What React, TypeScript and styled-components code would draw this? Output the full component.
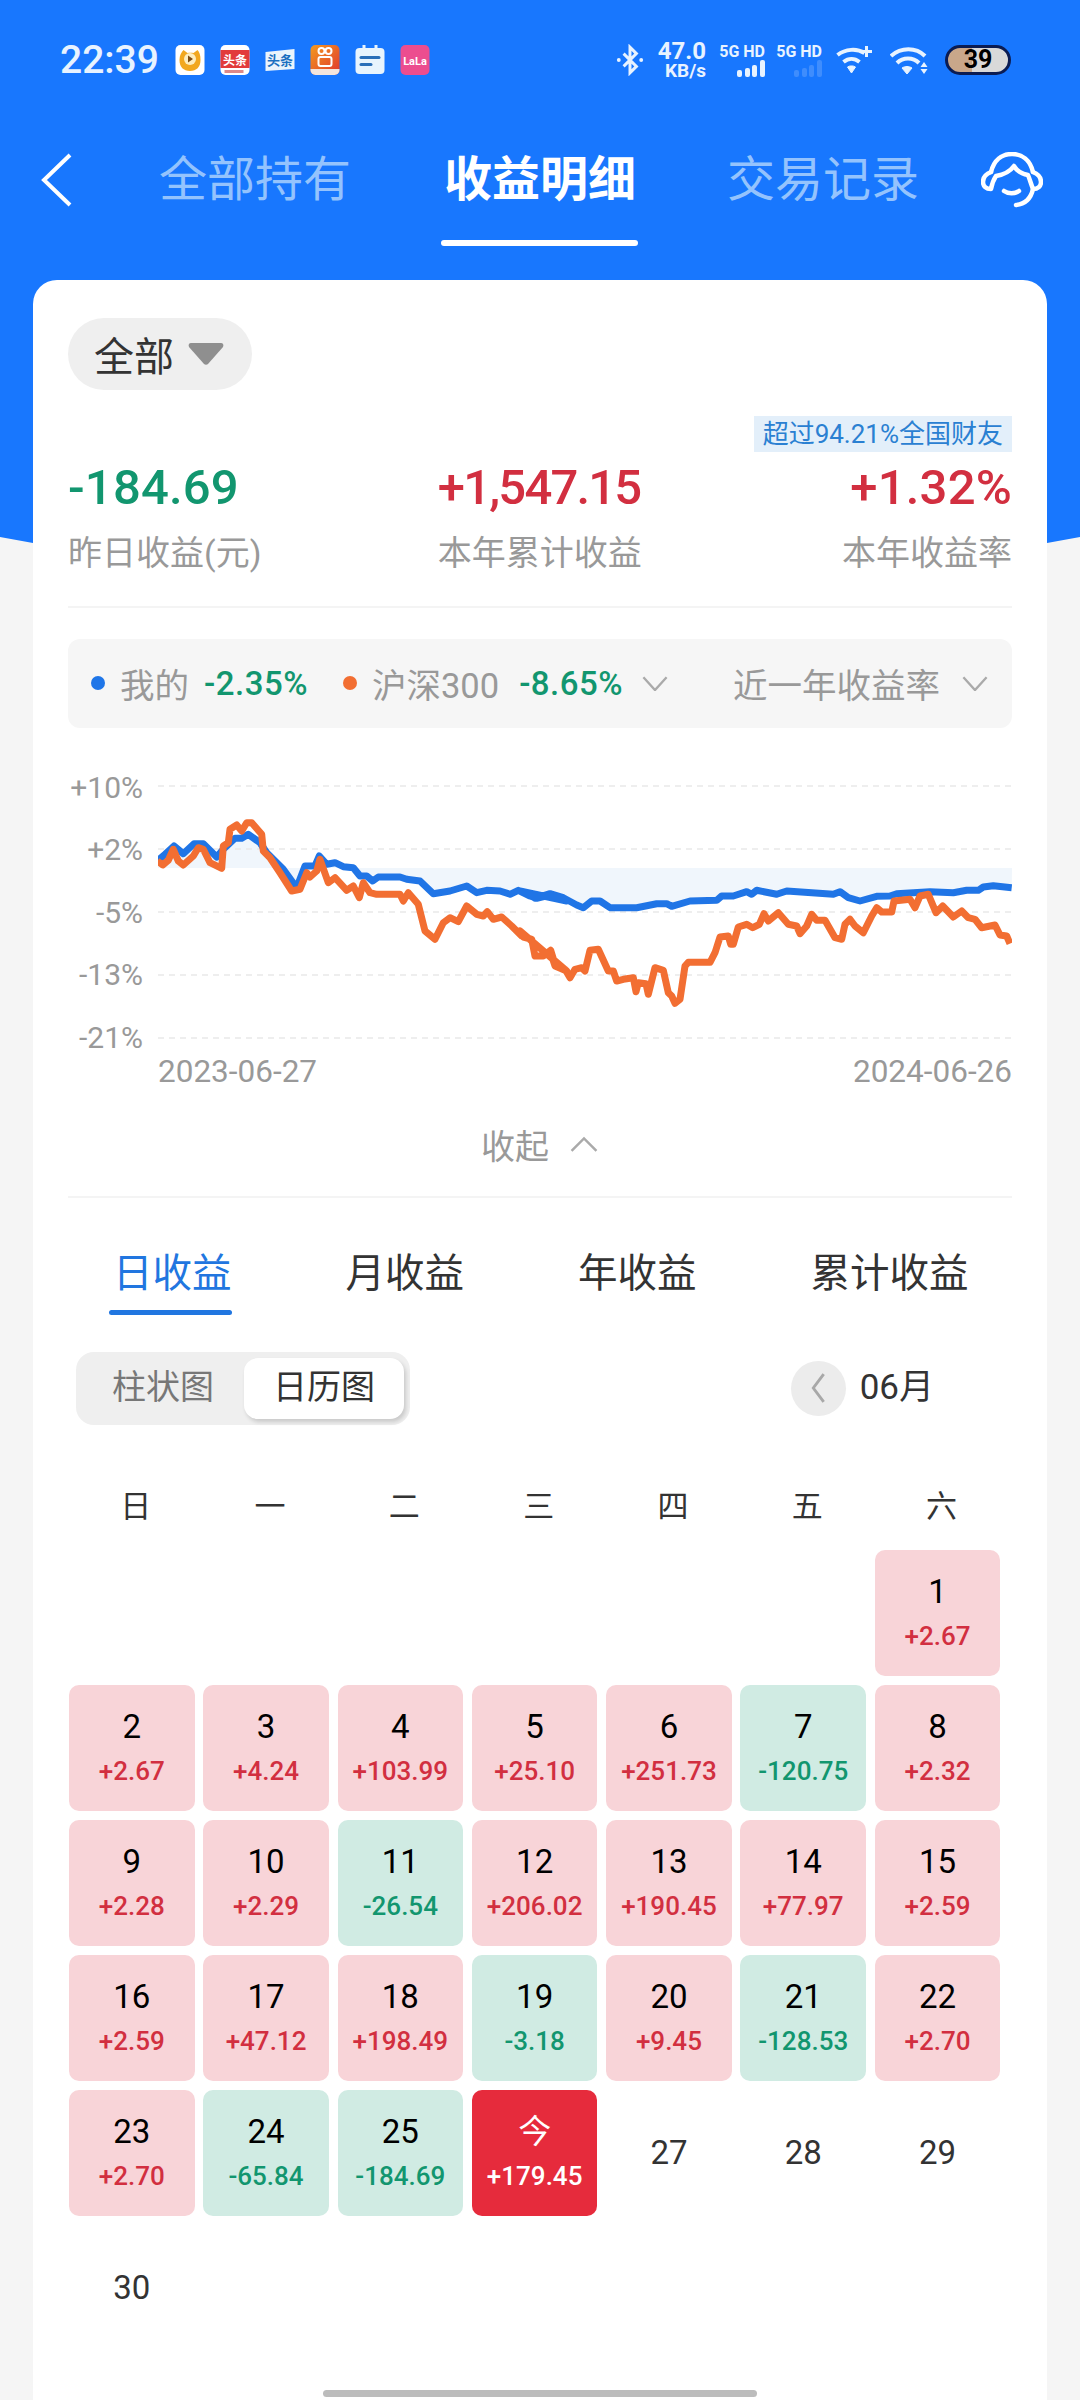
import React from 'react';
import styled, { createGlobalStyle } from 'styled-components';

const GlobalStyle = createGlobalStyle`
  html, body {
    margin: 0;
    padding: 0;
    background: #f5f5f5;
    font-family: Roboto, "Noto Sans CJK SC", sans-serif;
  }
`;

const COLOR = {
  blue: '#1877fe',
  link: '#2176e0',
  green: '#12966f',
  red: '#d22f40',
  grey: '#999999',
  dark: '#333333'
};

const Page = styled.div`
  position: relative;
  width: 1080px;
  height: 2400px;
  overflow: hidden;
  background: #f5f5f5;
  display: flex;
  flex-direction: column;

  &::before {
    content: '';
    position: absolute;
    inset: 0;
    background: ${COLOR.blue};
    clip-path: polygon(0 0, 100% 0, 100% 537px, 1047px 543px, 33px 543px, 0 537px);
  }
`;

/* ---- status bar ---- */
const StatusBar = styled.div`
  position: relative;
  height: 120px;
  flex: none;
  display: flex;
  align-items: center;
  padding: 0 69px 0 60px;
  color: #e8f3ff;
`;

const Clock = styled.span`
  font-size: 39px;
  font-weight: 500;
  width: 115px;
`;

const AppIcons = styled.div`
  display: flex;
  gap: 15px;
`;

const AppIcon = styled.svg`
  width: 30px;
  height: 30px;
  display: block;
`;

const StatusRight = styled.div`
  margin-left: auto;
  display: flex;
  align-items: center;
`;

const Speed = styled.div`
  display: flex;
  flex-direction: column;
  align-items: flex-end;
  margin: 0 10px 0 13px;
  font-weight: 700;
`;

const SpeedValue = styled.span`
  font-size: 24px;
  line-height: 21px;
`;

const SpeedUnit = styled.span`
  font-size: 19px;
  line-height: 17px;
`;

const Signal = styled.div`
  width: 49px;
  margin-right: 8px;
  display: flex;
  flex-direction: column;
  align-items: flex-end;
`;

const SignalLabel = styled.span`
  font-size: 16px;
  font-weight: 700;
  line-height: 17px;
  white-space: nowrap;
`;

const WifiPlus = styled.svg`
  width: 37px;
  height: 30px;
  margin: 0 17px 0 6px;
`;

const Battery = styled.div`
  width: 66px;
  height: 30px;
  box-sizing: border-box;
  margin-left: 17px;
  border: 3px solid #0b1c52;
  border-radius: 15px;
  background: linear-gradient(90deg, #c9a78a 0 40%, #d9d9d9 40% 100%);
  color: #000;
  font-size: 25px;
  font-weight: 700;
  line-height: 24px;
  text-align: center;
`;

/* ---- nav ---- */
const NavBar = styled.div`
  position: relative;
  flex: none;
  height: 160px;
  box-sizing: border-box;
  padding: 0 37px 40px 40px;
  display: flex;
  align-items: center;
`;

const BackIcon = styled.svg`
  flex: none;
  width: 32px;
  height: 54px;
`;

const NavTabs = styled.div`
  display: flex;
  margin-left: 87px;
  flex: none;
`;

const NavTab = styled.span<{ $active?: boolean }>`
  position: relative;
  font-size: 48px;
  line-height: 60px;
  white-space: nowrap;
  font-weight: ${(p) => (p.$active ? 700 : 400)};
  color: ${(p) => (p.$active ? '#ffffff' : '#94c3fd')};
  margin-right: ${(p) => (p.$active ? 91 : 93)}px;

  &:last-child {
    margin-right: 0;
  }

  &::after {
    content: '';
    display: ${(p) => (p.$active ? 'block' : 'none')};
    position: absolute;
    left: -3px;
    right: -2px;
    bottom: -36px;
    height: 6px;
    border-radius: 3px;
    background: #fff;
  }
`;

const NavAction = styled.div`
  margin-left: auto;
  display: flex;
`;

/* ---- card ---- */
const Card = styled.div`
  position: relative;
  flex: 1;
  margin: 0 33px;
  padding: 38px 35px 0;
  background: #fff;
  border-radius: 24px 24px 0 0;
`;

const FilterPill = styled.div`
  width: 184px;
  height: 72px;
  box-sizing: border-box;
  padding-left: 26px;
  border-radius: 36px;
  background: #efefef;
  color: ${COLOR.dark};
  font-size: 40px;
  display: flex;
  align-items: center;
  gap: 14px;
`;

const RankRow = styled.div`
  display: flex;
  justify-content: flex-end;
  margin-top: 26px;
`;

const RankTag = styled.span`
  height: 36px;
  line-height: 36px;
  padding: 0 9px;
  background: #e3effa;
  color: #2a80d2;
  font-size: 26px;
  white-space: nowrap;
`;

const StatRow = styled.div`
  display: flex;
  justify-content: space-between;
  padding-top: 1px;
  padding-bottom: 27.5px;
  border-bottom: 2px solid #f4f4f4;
`;

const Stat = styled.div<{ $align?: string }>`
  display: flex;
  flex-direction: column;
  align-items: ${(p) => p.$align || 'flex-start'};

  &:nth-child(2) {
    margin-right: 24px;
  }
`;

const StatValue = styled.span<{ $up?: boolean; $tight?: boolean }>`
  font-size: 49px;
  font-weight: 500;
  line-height: 70px;
  letter-spacing: ${(p) => (p.$tight ? '-1.8px' : '0.2px')};
  color: ${(p) => (p.$up ? COLOR.red : COLOR.green)};
`;

const StatLabel = styled.span`
  font-size: 34px;
  line-height: 50px;
  margin-top: 5px;
  color: ${COLOR.grey};
  white-space: nowrap;
`;

const Legend = styled.div`
  margin-top: 31px;
  height: 89px;
  box-sizing: border-box;
  padding: 0 23px;
  background: #f6f6f6;
  border-radius: 12px;
  display: flex;
  align-items: center;
  font-size: 34.5px;
  color: ${COLOR.grey};
  white-space: nowrap;
`;

const Dot = styled.i<{ $color: string; $gap?: number }>`
  width: 14px;
  height: 14px;
  border-radius: 50%;
  background: ${(p) => p.$color};
  margin-right: 15px;
  margin-left: ${(p) => p.$gap || 0}px;
`;

const LegendValue = styled.span<{ $gap: number }>`
  margin: 0 18px 0 ${(p) => p.$gap}px;
  font-size: 33px;
  font-weight: 500;
  letter-spacing: 0.5px;
  color: ${COLOR.green};
`;

const LegendRange = styled.span`
  margin-left: auto;
  display: flex;
  align-items: center;
  gap: 21px;
`;

const Chart = styled.div`
  margin-top: 43px;
  display: flex;
`;

const YAxis = styled.div`
  width: 75px;
  height: 282px;
  margin-right: 15px;
  display: flex;
  flex-direction: column;
  justify-content: space-between;
  padding-top: 2px;
  box-sizing: border-box;
  text-align: right;
  font-size: 30px;
  line-height: 30px;
  color: ${COLOR.grey};
`;

const Plot = styled.svg`
  width: 854px;
  height: 282px;
  display: block;
`;

const Dates = styled.div`
  margin: 1px 0 0 90px;
  display: flex;
  justify-content: space-between;
  font-size: 31.5px;
  line-height: 36px;
  color: ${COLOR.grey};
`;

const Collapse = styled.div`
  margin-top: 25px;
  height: 60px;
  display: flex;
  align-items: center;
  justify-content: center;
  gap: 20px;
  font-size: 34px;
  color: ${COLOR.grey};
`;

const Divider = styled.div`
  margin-top: 21px;
  height: 2px;
  background: #f4f4f4;
`;

const PeriodTabs = styled.div`
  margin-top: 48px;
  padding-left: 45px;
  display: flex;
  gap: 114px;
`;

const PeriodTab = styled.span<{ $active?: boolean }>`
  position: relative;
  font-size: 39.500px;
  line-height: 56px;
  white-space: nowrap;
  color: ${(p) => (p.$active ? COLOR.link : COLOR.dark)};

  &::after {
    content: '';
    display: ${(p) => (p.$active ? 'block' : 'none')};
    position: absolute;
    left: -4px;
    right: 0;
    bottom: -13px;
    height: 5px;
    border-radius: 3px;
    background: ${COLOR.link};
  }
`;

const ToolRow = styled.div`
  margin-top: 50px;
  display: flex;
  align-items: center;
  padding-left: 8px;
`;

const Segment = styled.div`
  width: 334px;
  height: 73px;
  box-sizing: border-box;
  padding: 6px;
  border-radius: 18px;
  background: #efefef;
  display: flex;
  align-items: center;
  justify-content: space-between;
`;

const SegmentItem = styled.span<{ $active?: boolean }>`
  width: 160px;
  height: 61px;
  line-height: 58px;
  text-align: center;
  font-size: 34px;
  border-radius: 14px;
  color: ${(p) => (p.$active ? COLOR.dark : '#777777')};
  background: ${(p) => (p.$active ? '#fff' : 'transparent')};
  box-shadow: ${(p) => (p.$active ? '2px 3px 4px rgba(0,0,0,0.16)' : 'none')};
  margin-left: ${(p) => (p.$active ? 0 : 1)}px;
`;

const MonthPicker = styled.div`
  margin-left: auto;
  margin-right: 78px;
  display: flex;
  align-items: center;
  gap: 14px;
  font-size: 35px;
  line-height: 50px;
  color: ${COLOR.dark};
`;

const RoundButton = styled.span`
  width: 55px;
  height: 55px;
  border-radius: 50%;
  background: #ececec;
  display: flex;
  align-items: center;
  justify-content: center;
`;

const CalendarGrid = styled.div`
  margin-left: 1px;
  display: grid;
  grid-template-columns: repeat(7, 125.5px);
  column-gap: 8.8px;
  row-gap: 8.5px;
  grid-auto-rows: 126.5px;
`;

const WeekHead = styled(CalendarGrid)`
  margin-top: 52px;
  margin-bottom: 13px;
  grid-auto-rows: 60px;
`;

const WeekDay = styled.span`
  font-size: 31px;
  line-height: 60px;
  text-align: center;
  color: ${COLOR.dark};
  transform: translateX(4px);
`;

type CellKind = 'up' | 'down' | 'today' | 'none';

const CELL_BG = { up: '#f8d4d8', down: '#d0ebe3', today: '#e62b3c', none: 'transparent' };

const Cell = styled.div<{ $kind: CellKind }>`
  border-radius: 10px;
  background: ${(p) => CELL_BG[p.$kind]};
  display: flex;
  flex-direction: column;
  align-items: center;
  justify-content: center;
  gap: 9px;
`;

const CellDay = styled.span<{ $kind: CellKind }>`
  font-size: 33px;
  line-height: 38px;
  color: ${(p) => (p.$kind === 'today' ? '#fff' : p.$kind === 'none' ? COLOR.dark : '#000')};
`;

const CellValue = styled.span<{ $kind: CellKind }>`
  font-size: 26px;
  line-height: 32px;
  font-weight: 500;
  white-space: nowrap;
  color: ${(p) => (p.$kind === 'today' ? '#fff' : p.$kind === 'up' ? COLOR.red : COLOR.green)};
`;

const HomeBar = styled.div`
  position: absolute;
  left: 323px;
  bottom: 3px;
  width: 434px;
  height: 7px;
  border-radius: 4px;
  background: #bcbcbc;
`;

// points read off the chart, in two half-width strips
const BLUE_A = [[322,330],[345,310],[372,285],[400,308],[432,278],[460,278],[500,318],[520,295],[555,262],[575,262],[595,250],[630,275],[650,305],[700,355],[740,410],[765,345],[795,345],[808,315],[830,340],[855,335],[880,347],[910,350],[930,375],[950,375],[968,390],[985,378],[1050,378],[1070,385],[1110,390],[1150,428],[1200,420],[1250,405],[1280,425],[1310,418],[1350,420],[1380,430],[1405,418],[1440,435],[1460,442],[1500,432],[1550,450]];
const BLUE_B = [[0,420],[30,430],[45,442],[90,428],[130,440],[170,462],[190,470],[215,450],[240,450],[270,470],[350,470],[410,458],[440,458],[455,466],[510,450],[590,448],[605,435],[640,435],[680,422],[695,430],[710,418],[770,430],[800,420],[940,430],[960,422],[985,440],[1020,450],[1070,436],[1110,435],[1130,428],[1230,422],[1300,425],[1340,418],[1375,418],[1390,408],[1420,404],[1475,410]];
const ORANGE_A = [[322,330],[338,342],[355,328],[370,295],[385,330],[400,342],[430,315],[445,290],[460,295],[480,335],[515,352],[520,285],[535,275],[540,235],[560,222],[575,240],[590,215],[605,215],[635,250],[640,300],[660,320],[690,365],[725,420],[750,415],[770,365],[780,378],[800,360],[810,325],[835,395],[855,380],[890,418],[910,405],[928,440],[940,395],[960,425],[980,430],[1050,430],[1060,450],[1075,425],[1105,460],[1125,540],[1155,565],[1180,515],[1200,500],[1225,512],[1250,465],[1280,490],[1300,495],[1312,482],[1330,505],[1355,498],[1385,525],[1415,555],[1445,565],[1455,615],[1480,615],[1500,600],[1515,645],[1550,660]];
const ORANGE_B = [[0,540],[10,558],[35,565],[45,615],[70,615],[92,598],[105,640],[135,655],[150,680],[165,655],[185,650],[195,660],[210,598],[235,595],[265,660],[280,660],[290,690],[310,685],[340,680],[348,722],[355,695],[378,698],[385,730],[405,650],[430,658],[445,725],[455,735],[465,757],[480,745],[495,645],[505,634],[570,634],[585,605],[600,558],[625,555],[632,580],[640,580],[655,528],[680,520],[698,530],[718,520],[732,488],[745,510],[775,485],[805,520],[830,525],[840,548],[860,525],[875,490],[890,508],[915,508],[945,560],[965,565],[975,520],[990,505],[1005,525],[1030,545],[1055,495],[1070,470],[1085,483],[1115,483],[1122,450],[1170,445],[1185,470],[1200,435],[1225,430],[1248,485],[1268,465],[1300,498],[1325,480],[1345,500],[1365,505],[1385,530],[1425,522],[1440,552],[1460,555],[1470,578]];

const toPlot = (a: number[][], b: number[][]) => {
  const left = a.map(([x, y]) => [x / 3 - 108, y / 3 - 20]);
  const right = b.map(([x, y]) => [x / 3 + 362, y / 3 - 20]);
  return [...left, ...right].map(([x, y]) => `${x.toFixed(1)},${y.toFixed(1)}`).join(' ');
};

const bluePoints = toPlot(BLUE_A, BLUE_B);
const orangePoints = toPlot(ORANGE_A, ORANGE_B);

const Y_LABELS = ['+10%', '+2%', '-5%', '-13%', '-21%'];
const GRID_Y = [15, 78, 141, 204, 267];
const WEEK = ['日', '一', '二', '三', '四', '五', '六'];

const DAYS: (string | null)[] = [
  null, null, null, null, null, null, '+2.67',
  '+2.67', '+4.24', '+103.99', '+25.10', '+251.73', '-120.75', '+2.32',
  '+2.28', '+2.29', '-26.54', '+206.02', '+190.45', '+77.97', '+2.59',
  '+2.59', '+47.12', '+198.49', '-3.18', '+9.45', '-128.53', '+2.70',
  '+2.70', '-65.84', '-184.69'
];

const Chevron = ({ dir, size = 26, color = '#aaaaaa', width = 2 }: { dir: 'up' | 'down' | 'left'; size?: number; color?: string; width?: number }) => {
  const d = dir === 'up' ? 'M2 12 L12 2 L22 12' : dir === 'down' ? 'M2 2 L12 13 L22 2' : 'M11 1 L2 13 L11 25';
  const box = dir === 'left' ? '0 0 13 26' : '0 0 24 14';
  const h = dir === 'left' ? size : size * 0.58;
  const w = dir === 'left' ? size / 2 : size;
  return (
    <svg width={w} height={h} viewBox={box} fill="none" stroke={color} strokeWidth={width}>
      <path d={d} />
    </svg>
  );
};

const AppIconRow = () => (
  <AppIcons>
    <AppIcon viewBox="0 0 29 30">
      <rect width="29" height="30" rx="5" fill="#fff" />
      <path d="M4 15c0-5 2-8 4-10l4 3c2-.5 4-.5 6 0l4-3c2 2 3 5 3 10 0 7-4 11-10.500 11S4 22 4 15z" fill="#f2a81f" />
      <circle cx="14.500" cy="14" r="6" fill="#fdeec0" />
      <path d="M12.500 10.500l5 3.500-5 3.500z" fill="#7a4a12" />
    </AppIcon>
    <AppIcon viewBox="0 0 29 30">
      <rect width="29" height="30" rx="5" fill="#fff" />
      <rect y="5" width="29" height="18" fill="#e23b3b" />
      <text x="14.500" y="19.500" textAnchor="middle" fontSize="12" fill="#fff" fontWeight="700" fontFamily="Noto Sans CJK SC">头条</text>
      <rect x="4" y="25" width="19" height="3" fill="#d88" />
    </AppIcon>
    <AppIcon viewBox="0 0 29 30">
      <path d="M0 7l29-3v20L0 26z" fill="#eaf4fc" />
      <text x="14.500" y="20" textAnchor="middle" fontSize="13" fill="#1b6fc0" fontWeight="700" fontFamily="Noto Sans CJK SC">头条</text>
    </AppIcon>
    <AppIcon viewBox="0 0 29 30">
      <defs>
        <linearGradient id="ks" x1="0" y1="0" x2="1" y2="1">
          <stop offset="0" stopColor="#f39a1f" />
          <stop offset="1" stopColor="#e0352f" />
        </linearGradient>
      </defs>
      <rect width="29" height="30" rx="5" fill="url(#ks)" />
      <g fill="none" stroke="#fff" strokeWidth="2">
        <circle cx="11" cy="6" r="3" />
        <circle cx="18" cy="6" r="3" />
        <rect x="8" y="12" width="13" height="9" rx="2" />
      </g>
      <path d="M0 24h29v1a5 5 0 0 1-5 5H5a5 5 0 0 1-5-5z" fill="#f3e5dd" />
    </AppIcon>
    <AppIcon viewBox="0 0 29 30">
      <rect y="3" width="29" height="26" rx="4" fill="#e8f4fd" />
      <rect x="7" y="0" width="3" height="6" fill="#e8f4fd" />
      <rect x="19" y="0" width="3" height="6" fill="#e8f4fd" />
      <rect x="4" y="11" width="21" height="3" rx="1.500" fill="#2a6fb8" />
      <rect x="4" y="18" width="13" height="3" rx="1.500" fill="#2a6fb8" />
    </AppIcon>
    <AppIcon viewBox="0 0 29 30">
      <rect width="29" height="30" rx="5" fill="#ec4d8f" />
      <text x="14.500" y="20" textAnchor="middle" fontSize="11" fill="#fff" fontWeight="700" fontFamily="Roboto">LaLa</text>
    </AppIcon>
  </AppIcons>
);

const SignalBars = ({ color }: { color: string }) => (
  <svg width="28" height="17" viewBox="0 0 28 17" fill={color}>
    <rect x="0" y="10" width="5" height="7" rx="2" />
    <rect x="8" y="8" width="5" height="9" rx="2" />
    <rect x="15" y="5" width="5" height="12" rx="2" />
    <rect x="23" y="0" width="5" height="17" rx="2" />
  </svg>
);

const StatusIcons = () => (
  <StatusRight>
    <svg width="30" height="32" viewBox="0 0 26 30" fill="none" stroke="#e8f3ff" strokeWidth="2.800">
      <path d="M7 9l12 12-6 6V3l6 6L7 21" />
      <circle cx="2.500" cy="15" r="1.800" fill="#e8f3ff" stroke="none" />
      <circle cx="23.500" cy="15" r="1.800" fill="#e8f3ff" stroke="none" />
    </svg>
    <Speed>
      <SpeedValue>47.0</SpeedValue>
      <SpeedUnit>KB/s</SpeedUnit>
    </Speed>
    <Signal>
      <SignalLabel>5G HD</SignalLabel>
      <SignalBars color="#e8f3ff" />
    </Signal>
    <Signal>
      <SignalLabel>5G HD</SignalLabel>
      <SignalBars color="#3f8dfd" />
    </Signal>
    <WifiPlus viewBox="0 0 36 30" fill="none" stroke="#e8f3ff" strokeWidth="4">
      <path d="M1 10c8-6 19-7 27-2M7 17c5-4 11-4 16 0" />
      <path d="M11 22c2-1.500 6-1.500 8 0l-4 6z" fill="#e8f3ff" strokeWidth="1" />
      <path d="M30 1v11M24.500 6.500h11" strokeWidth="3" />
    </WifiPlus>
    <svg width="38" height="30" viewBox="0 0 38 30" fill="none" stroke="#e8f3ff" strokeWidth="4">
      <path d="M1 11c10-9 25-9 34 0M7 18c6-6 16-6 22 0" />
      <path d="M12 23c3-2 7-2 10 0l-5 6z" fill="#e8f3ff" strokeWidth="1" />
      <path d="M34 17l3.500 5h-7zM34 29l3.500-5h-7z" fill="#e8f3ff" stroke="none" />
    </svg>
    <Battery>39</Battery>
  </StatusRight>
);

const ChartPlot = () => (
  <Plot viewBox="0 0 854 282">
    <polygon points={`${bluePoints} 854,97 0,97`} fill="#f0f6fc" />
    {GRID_Y.map((y) => (
      <line key={y} x1="0" x2="854" y1={y} y2={y} stroke="#e9e9e9" strokeWidth="1.500" strokeDasharray="6 5" />
    ))}
    <polyline points={bluePoints} fill="none" stroke="#2075e6" strokeWidth="7" strokeLinejoin="round" />
    <polyline points={orangePoints} fill="none" stroke="#f26e32" strokeWidth="7" strokeLinejoin="round" />
  </Plot>
);

const App = () => {
  return (
    <Page>
      <GlobalStyle />
      <StatusBar>
        <Clock>22:39</Clock>
        <AppIconRow />
        <StatusIcons />
      </StatusBar>

      <NavBar>
        <BackIcon viewBox="0 0 32 54" fill="none" stroke="#fff" strokeWidth="4">
          <path d="M30 2L4 27l26 25" />
        </BackIcon>
        <NavTabs>
          <NavTab>全部持有</NavTab>
          <NavTab $active>收益明细</NavTab>
          <NavTab>交易记录</NavTab>
        </NavTabs>
        <NavAction>
          <svg width="62" height="56" viewBox="0 0 62 56" fill="none" stroke="#fff" strokeWidth="4.500" strokeLinecap="round" strokeLinejoin="round">
            <path d="M10 20C13 8 21 2 31 2s18 6 21 18" />
            <path d="M10 20C5 22 2 26 2 30c0 4 3 7 8 7 1-5 3-10 5-13 6-1 13-3 18-10 3 5 8 8 14 9 2 5 3 9 5 14 5 0 8-3 8-7 0-4-3-8-8-10" />
            <path d="M23 39c4 3 11 3 15 0" />
            <path d="M52 37c-2 9-8 15-17 16" />
          </svg>
        </NavAction>
      </NavBar>

      <Card>
        <FilterPill>
          全部
          <svg width="36" height="24" viewBox="0 0 36 24">
            <path d="M3 1h30c2 0 3 2 2 4L20 22c-1 1-3 1-4 0L1 5C0 3 1 1 3 1z" fill="#8f8f8f" />
          </svg>
        </FilterPill>
        <RankRow>
          <RankTag>超过94.21%全国财友</RankTag>
        </RankRow>
        <StatRow>
          <Stat>
            <StatValue>-184.69</StatValue>
            <StatLabel>昨日收益(元)</StatLabel>
          </Stat>
          <Stat>
            <StatValue $up $tight>+1,547.15</StatValue>
            <StatLabel>本年累计收益</StatLabel>
          </Stat>
          <Stat $align="flex-end">
            <StatValue $up>+1.32%</StatValue>
            <StatLabel>本年收益率</StatLabel>
          </Stat>
        </StatRow>

        <Legend>
          <Dot $color="#1f76e8" />
          我的
          <LegendValue $gap={15}>-2.35%</LegendValue>
          <Dot $color="#f26e32" $gap={17} />
          沪深300
          <LegendValue $gap={20}>-8.65%</LegendValue>
          <Chevron dir="down" size={28} />
          <LegendRange>
            近一年收益率
            <Chevron dir="down" size={28} />
          </LegendRange>
        </Legend>

        <Chart>
          <YAxis>
            {Y_LABELS.map((label) => (
              <span key={label}>{label}</span>
            ))}
          </YAxis>
          <ChartPlot />
        </Chart>
        <Dates>
          <span>2023-06-27</span>
          <span>2024-06-26</span>
        </Dates>

        <Collapse>
          收起
          <Chevron dir="up" size={30} />
        </Collapse>
        <Divider />

        <PeriodTabs>
          <PeriodTab $active>日收益</PeriodTab>
          <PeriodTab>月收益</PeriodTab>
          <PeriodTab>年收益</PeriodTab>
          <PeriodTab>累计收益</PeriodTab>
        </PeriodTabs>

        <ToolRow>
          <Segment>
            <SegmentItem>柱状图</SegmentItem>
            <SegmentItem $active>日历图</SegmentItem>
          </Segment>
          <MonthPicker>
            <RoundButton>
              <Chevron dir="left" size={30} color="#a8a8a8" width={2.500} />
            </RoundButton>
            06月
          </MonthPicker>
        </ToolRow>

        <WeekHead>
          {WEEK.map((d) => (
            <WeekDay key={d}>{d}</WeekDay>
          ))}
        </WeekHead>

        <CalendarGrid>
          {DAYS.map((value, i) => {
            if (!value) return <div key={i} />;
            const kind: CellKind = value.startsWith('+') ? 'up' : 'down';
            return (
              <Cell key={i} $kind={kind}>
                <CellDay $kind={kind}>{i - 5}</CellDay>
                <CellValue $kind={kind}>{value}</CellValue>
              </Cell>
            );
          })}
          <Cell $kind="today">
            <CellDay $kind="today">今</CellDay>
            <CellValue $kind="today">+179.45</CellValue>
          </Cell>
          {[27, 28, 29, 30].map((d) => (
            <Cell key={d} $kind="none">
              <CellDay $kind="none">{d}</CellDay>
            </Cell>
          ))}
        </CalendarGrid>
      </Card>
      <HomeBar />
    </Page>
  );
};

export default App;
